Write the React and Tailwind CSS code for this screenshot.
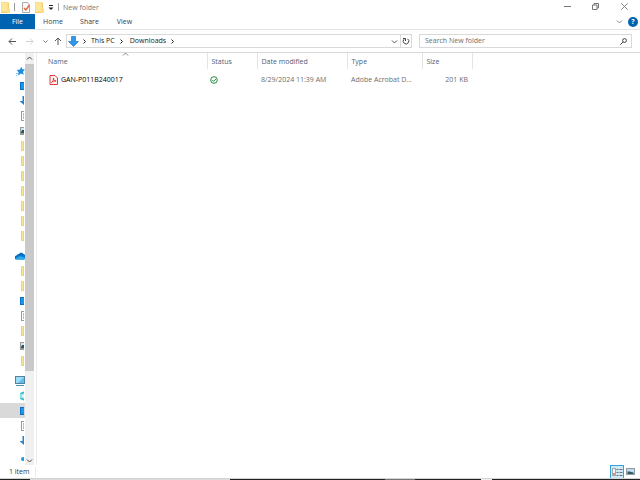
import { clsx } from 'clsx';

const NAV_GROUPS = [
  {
    name: 'Quick access',
    icon: 'star',
    children: ['desktop', 'download', 'document', 'picture', 'folder', 'folder', 'folder', 'folder', 'folder', 'folder', 'folder'],
  },
  {
    name: 'OneDrive',
    icon: 'cloud',
    children: ['folder', 'folder', 'desktop', 'document', 'folder', 'picture', 'folder'],
  },
  {
    name: 'This PC',
    icon: 'pc',
    children: ['objects', 'desktop', 'document', 'download', 'music'],
    selected: 1,
  },
];

const COLUMNS = [
  { label: 'Name', width: 'w-[170px]', pad: 'pl-[11px]', sorted: true },
  { label: 'Status', width: 'w-[50px]', pad: 'pl-[4px]' },
  { label: 'Date modified', width: 'w-[90px]', pad: 'pl-[4px]' },
  { label: 'Type', width: 'w-[75px]', pad: 'pl-[4px]' },
  { label: 'Size', width: 'w-[50px]', pad: 'pl-[4px]' },
];

const ICONS = {
  star: (
    <>
      <path d="M6.500 .5l.8 2.700 2.700.3-2 2.300.8 3L6 7.500 3 9.500l.6-3.300L1.800 4l3.200-.6z" fill="#1b8de0" />
      <path d="M1 7.500h2M1 9.500h1" stroke="#8bc4ec" />
    </>
  ),
  desktop: (
    <>
      <rect x="0" y="1" width="10" height="8" fill="#0b6fc4" />
      <rect x="1" y="2" width="3" height="6" fill="#1499f2" />
    </>
  ),
  download: <path d="M2.500 0H5v10L0 5.500V5h2.500z" fill="#2583d0" />,
  document: (
    <>
      <path d="M2 .5h3M1.500 0v10M2 9.500h3" stroke="#9b9b9b" />
      <path d="M3 3h2M3 7h1" stroke="#777" />
      <path d="M3 5h2M4 2h1" stroke="#4ba3dd" />
    </>
  ),
  picture: (
    <>
      <rect x="0.500" y="1.500" width="9" height="7" fill="#c9e7fa" stroke="#9b9b9b" />
      <path d="M1 6l1-2h3v3H1z" fill="#2c5566" />
      <path d="M1 7.500h4" stroke="#79a884" />
    </>
  ),
  folder: (
    <>
      <path d="M1 0h3v10H1z" fill="#f9e796" />
      <path d="M1.500 0v9.500H4M3.500 0v10" fill="none" stroke="#ecd27a" />
    </>
  ),
  cloud: (
    <>
      <path d="M2 8.500a2 2 0 0 1-.5-4C2 3 3.500 3 4 3c1-2 4-1.500 4.500 0C11 3 11 8.500 9 8.500z" fill="#0870c4" />
      <path d="M1 7l4-2 5 1.500c0 2-1 2-1 2H2Q1 8.500 1 7z" fill="#28a8ea" />
    </>
  ),
  pc: (
    <>
      <rect x="0.500" y="0.500" width="9" height="7" fill="#58c1f2" stroke="#597f99" />
      <path d="M1 1h8L3 7H1z" fill="#9bdcf8" />
      <path d="M1 9.500h8" stroke="#4c91bd" />
    </>
  ),
  objects: (
    <>
      <path d="M0 2l5-2v10L0 8z" fill="#8de0e8" />
      <path d="M0 2l5-2v2L1 3zM0 7l5 1v2L0 8z" fill="#35bdcb" />
      <path d="M2 4l3-1v4L2 6z" fill="#e2f9fa" />
    </>
  ),
  music: (
    <>
      <circle cx="3" cy="8" r="2" fill="#169ee9" />
      <path d="M4.500 6v2" stroke="#169ee9" />
    </>
  ),
};

function NavIcon({ type }) {
  return (
    <svg className="h-[10px] w-[11px] shrink-0" viewBox="0 0 11 10" aria-hidden="true">
      {ICONS[type]}
    </svg>
  );
}

function Chevron({ dir = 'down', className }) {
  const paths = {
    down: 'M1 2.500l2.500 2.500L6 2.500',
    up: 'M1 4.500L3.500 2 6 4.500',
    right: 'M2.500 1.500l2 2-2 2',
  };
  return (
    <svg className={clsx('h-[7px] w-[7px] shrink-0', className)} viewBox="0 0 7 7" fill="none" stroke="currentColor" aria-hidden="true">
      <path d={paths[dir]} />
    </svg>
  );
}

function FolderIcon() {
  return (
    <svg className="h-[11px] w-[9px] shrink-0" viewBox="0 0 9 11" aria-hidden="true">
      <path d="M0 0h7l1 1v5l1 1v4H0z" fill="#fbdf82" />
      <path d="M7.500 1v5M0 10.500h6" stroke="#f0cd70" />
      <path d="M1 1h5v8H1z" fill="#fde798" />
    </svg>
  );
}

function TitleBar() {
  return (
    <header className="flex h-[14px] shrink-0 items-center text-[#777]">
      <span className="flex w-[14px] pl-px"><FolderIcon /></span>
      <span className="h-[8px] w-px bg-[#999]" />
      <button type="button" aria-label="Properties" className="ml-[6px]">
        <svg className="h-[11px] w-[10px]" viewBox="0 0 10 11" fill="none">
          <path d="M1.500.5h5L8.500 3v7.500h-7z" fill="#fafafa" stroke="#aaa" />
          <path d="M3 6l1.800 2L8.500 3" stroke="#e36434" strokeWidth="1.400" />
        </svg>
      </button>
      <button type="button" aria-label="New folder" className="ml-[4px]"><FolderIcon /></button>
      <button type="button" aria-label="Customize toolbar" className="ml-[4px] pt-px">
        <svg className="h-[6px] w-[6px]" viewBox="0 0 6 6">
          <path d="M1 .5h4" stroke="#222" />
          <path d="M.5 2.500h5L3 5z" fill="#222" />
        </svg>
      </button>
      <span className="ml-[4px] h-[8px] w-px bg-[#aaa]" />
      <h1 className="ml-[4px] pt-px">New folder</h1>
      <div className="ml-auto flex h-full items-center pb-px text-[#777]">
        <button type="button" aria-label="Minimize" className="flex w-[28px] justify-center">
          <svg className="h-[7px] w-[7px]" viewBox="0 0 7 7" stroke="currentColor"><path d="M0 3.500h7" /></svg>
        </button>
        <button type="button" aria-label="Restore" className="flex w-[28px] justify-center">
          <svg className="h-[7px] w-[7px]" viewBox="0 0 7 7" fill="none" stroke="currentColor">
            <path d="M.5 2h4.500v4.500H.5zM2 2V.5h4.500V5H5" />
          </svg>
        </button>
        <button type="button" aria-label="Close" className="flex w-[31px] justify-center">
          <svg className="h-[7px] w-[7px]" viewBox="0 0 7 7" stroke="currentColor" strokeWidth="0.900"><path d="M.3.3l6.400 6.400M6.700.3L.3 6.700" /></svg>
        </button>
      </div>
    </header>
  );
}

function Ribbon() {
  return (
    <nav className="flex h-[16px] shrink-0 items-stretch border-b border-[#e4e4e4] text-[#333f55]">
      <button type="button" className="w-[35px] bg-[#0063b1] pt-px text-white">File</button>
      <button type="button" className="w-[36px] pt-px">Home</button>
      <button type="button" className="w-[37px] pt-px">Share</button>
      <button type="button" className="w-[33px] pt-px">View</button>
      <div className="ml-auto flex items-center gap-[5px] pr-[2px]">
        <button type="button" aria-label="Expand ribbon" className="text-[#888]"><Chevron /></button>
        <button type="button" aria-label="Help" className="flex h-[10px] w-[10px] items-center justify-center rounded-full bg-[#0063b1] font-bold text-white">?</button>
      </div>
    </nav>
  );
}

function AddressBar() {
  return (
    <div className="flex h-[23px] shrink-0 items-center border-b border-[#d9d9d9] pr-[8px] text-[#222]">
      <button type="button" aria-label="Back" className="ml-[8px] text-[#555]">
        <svg className="h-[7px] w-[8px]" viewBox="0 0 8 7" fill="none" stroke="currentColor"><path d="M8 3.500H1M4 .5l-3 3 3 3" /></svg>
      </button>
      <button type="button" aria-label="Forward" className="ml-[10px] text-[#d2d2d2]">
        <svg className="h-[7px] w-[8px]" viewBox="0 0 8 7" fill="none" stroke="currentColor"><path d="M0 3.500h7M4 .5l3 3-3 3" /></svg>
      </button>
      <button type="button" aria-label="Recent locations" className="ml-[9px] text-[#777]">
        <svg className="h-[5px] w-[5px]" viewBox="0 0 5 5" fill="none" stroke="currentColor"><path d="M.5 1.500l2 2 2-2" /></svg>
      </button>
      <button type="button" aria-label="Up" className="ml-[6px] text-[#555]">
        <svg className="h-[8px] w-[8px]" viewBox="0 0 8 8" fill="none" stroke="currentColor"><path d="M4 8V1M1 4l3-3 3 3" /></svg>
      </button>
      <div className="ml-[4px] flex h-[14px] flex-1 items-center border border-[#d9d9d9]">
        <svg className="ml-px h-[11px] w-[11px] shrink-0" viewBox="0 0 11 11" aria-hidden="true">
          <path d="M3.500.5h4v5h3l-5 5-5-5h3z" fill="#2f96ec" stroke="#217ac8" strokeWidth="0.700" />
        </svg>
        <Chevron dir="right" className="ml-[2px]" />
        <a href="#this-pc" className="ml-[3px]">This PC</a>
        <Chevron dir="right" className="ml-[3px]" />
        <a href="#downloads" className="ml-[5px]">Downloads</a>
        <Chevron dir="right" className="ml-[3px]" />
        <button type="button" aria-label="Previous locations" className="mr-[2px] ml-auto text-[#555]"><Chevron /></button>
        <button type="button" aria-label="Refresh" className="flex h-full w-[11px] items-center justify-center border-l border-[#d9d9d9] text-[#444]">
          <svg className="h-[8px] w-[8px]" viewBox="0 0 8 8" fill="none" stroke="currentColor">
            <path d="M5.500 1.800A2.800 2.800 0 1 1 2 2.200M1 1.500h2.500V4" />
          </svg>
        </button>
      </div>
      <label className="ml-[7px] flex h-[14px] w-[213px] items-center border border-[#d9d9d9] pr-[4px] pl-[5px]">
        <input type="search" aria-label="Search New folder" placeholder="Search New folder" className="min-w-0 flex-1 outline-none placeholder:text-[#6d6d6d]" />
        <svg className="h-[7px] w-[7px] shrink-0" viewBox="0 0 7 7" fill="none" stroke="#444" aria-hidden="true">
          <circle cx="4.500" cy="2.500" r="1.900" /><path d="M3 4L.4 6.600" />
        </svg>
      </label>
    </div>
  );
}

function NavPane() {
  return (
    <aside className="flex w-[37px] shrink-0 border-r border-[#ececec]">
      <ul className="flex w-[25px] flex-col gap-[5px] pt-[10px]">
        {NAV_GROUPS.map((group) => (
          <li key={group.name}>
            <a href="#group" aria-label={group.name} className="flex h-[15px] w-[25px] items-center overflow-hidden pl-[15px]"><NavIcon type={group.icon} /></a>
            <ul>
              {group.children.map((type, i) => (
                <li key={i} className={clsx(group.selected === i && 'bg-[#d9d9d9]')}>
                  <a href="#item" aria-label={type} className="flex h-[15px] w-[24px] items-center overflow-hidden pl-[20px]"><NavIcon type={type} /></a>
                </li>
              ))}
            </ul>
          </li>
        ))}
      </ul>
      <div className="flex w-[9px] flex-col items-center bg-[#f0f0f0] text-[#444]">
        <button type="button" aria-label="Scroll up" className="flex h-[11px] items-center"><Chevron dir="up" /></button>
        <div className="w-full flex-[307] bg-[#c9c9c9]" />
        <div className="flex-[84]" />
        <button type="button" aria-label="Scroll down" className="flex h-[10px] items-center"><Chevron /></button>
      </div>
    </aside>
  );
}

function FileList() {
  return (
    <main className="flex-1">
      <table className="table-fixed border-collapse text-left whitespace-nowrap">
        <thead>
          <tr className="h-[16px] text-[#4c607a]">
            {COLUMNS.map((col) => (
              <th key={col.label} className={clsx('relative border-r border-[#e4e4e4] p-0 pt-[2px] font-normal', col.width, col.pad)}>
                {col.sorted && <Chevron dir="up" className="absolute top-[-2px] left-[85px] text-[#888]" />}
                {col.label}
              </th>
            ))}
          </tr>
        </thead>
        <tbody>
          <tr className="h-[21px] text-[#6d6d6d]">
            <td className="p-0 pl-[12px] text-black">
              <div className="flex items-center gap-[3px]">
                <svg className="h-[10px] w-[9px]" viewBox="0 0 9 10" fill="none" aria-hidden="true">
                  <path d="M1 .5h5L8.500 3v6.500H1z" fill="#fff1f1" stroke="#e23b3b" />
                  <path d="M2.500 7.500c1.500-1 2-2.500 2-4.500 0 2 1 3 2.500 3-2 0-3 .4-4.500 1.500z" stroke="#dc1d1d" strokeWidth="0.800" />
                </svg>
                GAN-P011B240017
              </div>
            </td>
            <td className="p-0 pl-[3px]">
              <svg className="h-[8px] w-[8px]" viewBox="0 0 8 8" fill="none" stroke="#258a3c" role="img" aria-label="Available">
                <circle cx="4" cy="4" r="3.300" /><path d="M2.300 4l1.300 1.300L6 3" />
              </svg>
            </td>
            <td className="p-0 pl-[4px]">8/29/2024 11:39 AM</td>
            <td className="p-0 pl-[4px]">Adobe Acrobat D...</td>
            <td className="p-0 pr-[4px] text-right">201 KB</td>
          </tr>
        </tbody>
      </table>
    </main>
  );
}

function StatusBar() {
  return (
    <footer className="flex h-[13px] shrink-0 items-center text-[#2c3b55]">
      <span className="w-[36px] border-r border-[#ececec] pl-[9px] whitespace-nowrap">1 item</span>
      <div className="ml-auto flex items-center gap-[2px] pr-[5px]">
        <button type="button" aria-label="Details view" className="border border-[#35a2d8] bg-[#cfeaf7]">
          <svg className="h-[12px] w-[12px]" viewBox="0 0 12 12" fill="none">
            <rect x="1.500" y="2.500" width="3" height="7" fill="#f4f4f4" stroke="#a9a9a9" />
            <path d="M2 8h2" stroke="#ec8a8a" strokeWidth="2" />
            <path d="M5.500 3.500h2M8.500 3.500h3M5.500 6.500h2M8.500 6.500h3M5.500 9.500h2M8.500 9.500h3" stroke="#66767f" />
          </svg>
        </button>
        <button type="button" aria-label="Large icons view">
          <svg className="h-[7px] w-[9px]" viewBox="0 0 9 7">
            <rect x=".5" y=".5" width="8" height="6" fill="#b9dcf5" stroke="#999" />
            <path d="M1.500 3.500h2l4 1V6h-6z" fill="#31586a" />
          </svg>
        </button>
      </div>
    </footer>
  );
}

export default function App() {
  return (
    <div className="flex min-h-screen flex-col bg-white font-['Open_Sans','Noto_Sans',sans-serif] text-[7px] leading-[10px] text-[#222]">
      <TitleBar />
      <Ribbon />
      <AddressBar />
      <div className="flex flex-1">
        <NavPane />
        <FileList />
      </div>
      <StatusBar />
      <div className="flex h-[2px] shrink-0 border-t border-[#d4d4d4]">
        <div className="flex-[30] bg-[#222]" />
        <div className="flex-[200] bg-[#dcdcdc]" />
        <div className="flex-[155] bg-[#222]" />
        <div className="flex-[30] bg-[#777]" />
        <div className="flex-[66] bg-[#222]" />
        <div className="flex-[11] bg-[#eee]" />
        <div className="flex-[148] bg-[#222]" />
      </div>
    </div>
  );
}
